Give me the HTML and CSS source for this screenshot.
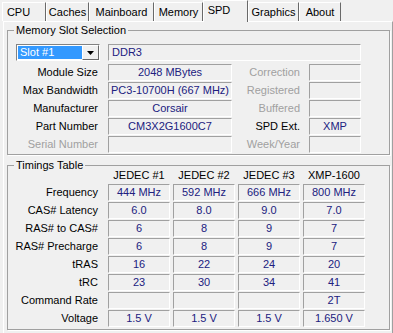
FILE: index.html
```html
<!DOCTYPE html>
<html lang="en">
<head>
    <meta charset="UTF-8">
    <meta name="viewport" content="width=device-width, initial-scale=1.0">
    <title>CPU-Z - SPD</title>
    <link rel="stylesheet" href="styles.css">
</head>
<body>
    <div class="window">
        <div class="tabs">
            <div class="tab tab-cpu">CPU</div>
            <div class="tab tab-caches">Caches</div>
            <div class="tab tab-mainboard">Mainboard</div>
            <div class="tab tab-memory">Memory</div>
            <div class="tab tab-spd active">SPD</div>
            <div class="tab tab-graphics">Graphics</div>
            <div class="tab tab-about">About</div>
        </div>

        <div class="panel">
            <fieldset class="group slot-group">
                <legend>Memory Slot Selection</legend>
                <div class="slot-grid">
                    <div class="combo">
                        <span class="combo-value">Slot #1</span>
                        <span class="combo-btn">
                            <svg width="7" height="4" viewBox="0 0 7 4"><polygon points="0,0 7,0 3.5,4" fill="#000"/></svg>
                        </span>
                    </div>
                    <div class="field field-type">DDR3</div>

                    <span class="label">Module Size</span>
                    <div class="field">2048 MBytes</div>
                    <span class="label label-right disabled">Correction</span>
                    <div class="field"></div>

                    <span class="label">Max Bandwidth</span>
                    <div class="field">PC3-10700H (667 MHz)</div>
                    <span class="label label-right disabled">Registered</span>
                    <div class="field"></div>

                    <span class="label">Manufacturer</span>
                    <div class="field">Corsair</div>
                    <span class="label label-right disabled">Buffered</span>
                    <div class="field"></div>

                    <span class="label">Part Number</span>
                    <div class="field">CM3X2G1600C7</div>
                    <span class="label label-right">SPD Ext.</span>
                    <div class="field">XMP</div>

                    <span class="label disabled">Serial Number</span>
                    <div class="field"></div>
                    <span class="label label-right disabled">Week/Year</span>
                    <div class="field"></div>
                </div>
            </fieldset>

            <fieldset class="group timings-group">
                <legend>Timings Table</legend>
                <div class="timings-grid">
                    <span></span>
                    <span class="col-head">JEDEC #1</span>
                    <span class="col-head">JEDEC #2</span>
                    <span class="col-head">JEDEC #3</span>
                    <span class="col-head">XMP-1600</span>

                    <span class="label">Frequency</span>
                    <div class="field">444 MHz</div>
                    <div class="field">592 MHz</div>
                    <div class="field">666 MHz</div>
                    <div class="field">800 MHz</div>

                    <span class="label">CAS# Latency</span>
                    <div class="field">6.0</div>
                    <div class="field">8.0</div>
                    <div class="field">9.0</div>
                    <div class="field">7.0</div>

                    <span class="label">RAS# to CAS#</span>
                    <div class="field">6</div>
                    <div class="field">8</div>
                    <div class="field">9</div>
                    <div class="field">7</div>

                    <span class="label">RAS# Precharge</span>
                    <div class="field">6</div>
                    <div class="field">8</div>
                    <div class="field">9</div>
                    <div class="field">7</div>

                    <span class="label">tRAS</span>
                    <div class="field">16</div>
                    <div class="field">22</div>
                    <div class="field">24</div>
                    <div class="field">20</div>

                    <span class="label">tRC</span>
                    <div class="field">23</div>
                    <div class="field">30</div>
                    <div class="field">34</div>
                    <div class="field">41</div>

                    <span class="label">Command Rate</span>
                    <div class="field"></div>
                    <div class="field"></div>
                    <div class="field"></div>
                    <div class="field">2T</div>

                    <span class="label">Voltage</span>
                    <div class="field">1.5 V</div>
                    <div class="field">1.5 V</div>
                    <div class="field">1.5 V</div>
                    <div class="field">1.650 V</div>
                </div>
            </fieldset>
        </div>
    </div>
</body>
</html>
```

FILE: styles.css
```css
body {
    margin: 0;
    background-color: #f0f0f0;
    font-family: "Liberation Sans", Arial, sans-serif;
    font-size: 11px;
    color: #000;
}
.window {
    width: 393px;
    height: 333px;
    overflow: hidden;
}

/* tab strip */
.tabs {
    display: flex;
    align-items: flex-start;
    height: 21px;
    padding-left: 2px;
}
.tab {
    box-sizing: border-box;
    height: 19px;
    margin-top: 2px;
    padding-top: 3px;
    line-height: 13px;
    text-align: center;
    white-space: nowrap;
    border-top: 1px solid #fff;
    border-left: 1px solid #fff;
    border-right: 1px solid #696969;
}
.tab-cpu { width: 44px; padding-right: 11px; }
.tab-caches { width: 43px; }
.tab-mainboard { width: 65px; }
.tab-memory { width: 49px; }
.tab-spd { width: 45px; padding-right: 13px; }
.tab-graphics { width: 51px; }
.tab-about { width: 42px; }
.tab.active {
    position: relative;
    z-index: 1;
    height: 22px;
    margin-top: 0;
    padding-top: 3px;
    background-color: #f0f0f0;
}

/* main page */
.panel {
    box-sizing: border-box;
    width: 390px;
    height: 330px;
    margin-left: 3px;
    border-top: 1px solid #fff;
    border-left: 1px solid #fff;
    border-right: 1px solid #a0a0a0;
    box-shadow: 1px 0 0 #696969;
    padding-top: 2px;
}
.group {
    box-sizing: border-box;
    width: 383px;
    margin: 0 0 0 3px;
    padding: 0;
    border: 1px solid #a0a0a0;
    box-shadow: 1px 1px 0 #fff;
    min-inline-size: 0;
}
.group legend {
    margin-left: 6px;
    padding: 0 2px;
    line-height: 12px;
}
.label {
    text-align: right;
    padding-right: 10px;
    line-height: 17px;
    white-space: nowrap;
}
.label-right {
    padding-right: 9px;
}
.disabled {
    color: #a0a0a0;
}
.field {
    box-sizing: border-box;
    height: 17px;
    line-height: 15px;
    border: 1px solid;
    border-color: #a0a0a0 #fff #fff #a0a0a0;
    color: #20207f;
    text-align: center;
    white-space: nowrap;
    overflow: hidden;
}

/* memory slot selection */
.slot-group {
    padding: 8px 0 1px 0;
}
.slot-grid {
    display: grid;
    grid-template-columns: 100px 124px 77px 52px;
    grid-template-rows: 19px repeat(5, 17px);
    row-gap: 1px;
}
.combo {
    box-sizing: border-box;
    display: flex;
    width: 84px;
    height: 17px;
    margin-left: 8px;
    border: 1px solid;
    border-color: #828282 #fff #fff #828282;
    background-color: #fff;
}
.combo-value {
    flex: 1;
    margin: 1px 0 1px 1px;
    padding-left: 2px;
    background-color: #3399ff;
    color: #fff;
    line-height: 13px;
}
.combo-btn {
    box-sizing: border-box;
    width: 17px;
    display: flex;
    align-items: center;
    justify-content: center;
    background-color: #f0f0f0;
    border: 1px solid;
    border-color: #fff #696969 #696969 #fff;
}
.field-type {
    grid-column: 2 / 5;
    text-align: left;
    padding-left: 3px;
}

/* timings table */
.timings-group {
    margin-top: 4px;
    padding: 0 0 2px 0;
}
.timings-grid {
    display: grid;
    grid-template-columns: 97px repeat(4, 62px);
    grid-template-rows: 14px repeat(8, 17px);
    column-gap: 3px;
    row-gap: 1px;
    margin-top: -2px;
}
.timings-grid .label {
    padding-right: 7px;
}
.col-head {
    text-align: center;
    line-height: 12px;
}
```
